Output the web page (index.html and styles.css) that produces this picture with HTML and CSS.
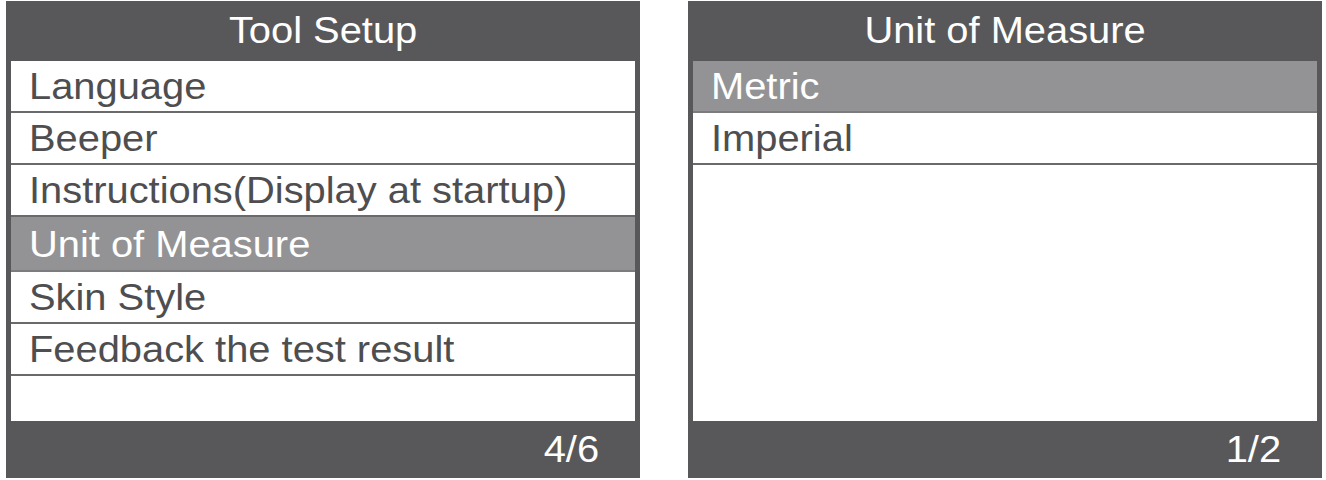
FILE: index.html
```html
<!DOCTYPE html>
<html>
<head>
<meta charset="utf-8">
<link rel="stylesheet" href="styles.css">
</head>
<body>
<div class="screens">
  <div class="panel">
    <div class="header"><span class="t">Tool Setup</span></div>
    <div class="list">
      <div class="row"><span class="t">Language</span></div>
      <div class="row"><span class="t">Beeper</span></div>
      <div class="row"><span class="t">Instructions(Display at startup)</span></div>
      <div class="row selected"><span class="t">Unit of Measure</span></div>
      <div class="row"><span class="t">Skin Style</span></div>
      <div class="row"><span class="t">Feedback the test result</span></div>
    </div>
    <div class="footer"><span class="t">4/6</span></div>
  </div>
  <div class="panel">
    <div class="header"><span class="t">Unit of Measure</span></div>
    <div class="list">
      <div class="row selected first"><span class="t">Metric</span></div>
      <div class="row"><span class="t">Imperial</span></div>
    </div>
    <div class="footer"><span class="t">1/2</span></div>
  </div>
</div>
</body>
</html>
```

FILE: styles.css
```css
html, body {
  margin: 0;
  padding: 0;
  background: #ffffff;
}
body {
  font-family: "Liberation Sans", Arial, sans-serif;
}
.screens {
  display: flex;
  gap: 48px;
  padding: 1px 0 0 6px;
}
.panel {
  width: 634px;
  height: 477px;
  box-sizing: border-box;
  background: #58585a;
  padding: 0 5px;
  display: flex;
  flex-direction: column;
}
.t {
  display: inline-block;
  transform: scaleX(1.107);
  transform-origin: left center;
}
.header {
  height: 60px;
  line-height: 60px;
  text-align: center;
  color: #ffffff;
  font-size: 36px;
}
.header .t {
  transform-origin: center center;
}
.list {
  height: 360px;
  background: #ffffff;
}
.row {
  height: 50px;
  line-height: 51px;
  border-bottom: 2px solid #6a6a6c;
  padding-left: 18px;
  font-size: 36px;
  color: #4e4e50;
  white-space: nowrap;
}
.row.selected {
  height: 53px;
  line-height: 56px;
  background: #939396;
  color: #ffffff;
  border-bottom-color: #7c7c7f;
}
.row.selected.first {
  height: 50px;
  line-height: 52px;
}
.footer {
  flex: 1;
  display: flex;
  align-items: center;
  justify-content: flex-end;
  padding-right: 36px;
  color: #ffffff;
  font-size: 36px;
}
.footer .t {
  transform-origin: right center;
}
```
